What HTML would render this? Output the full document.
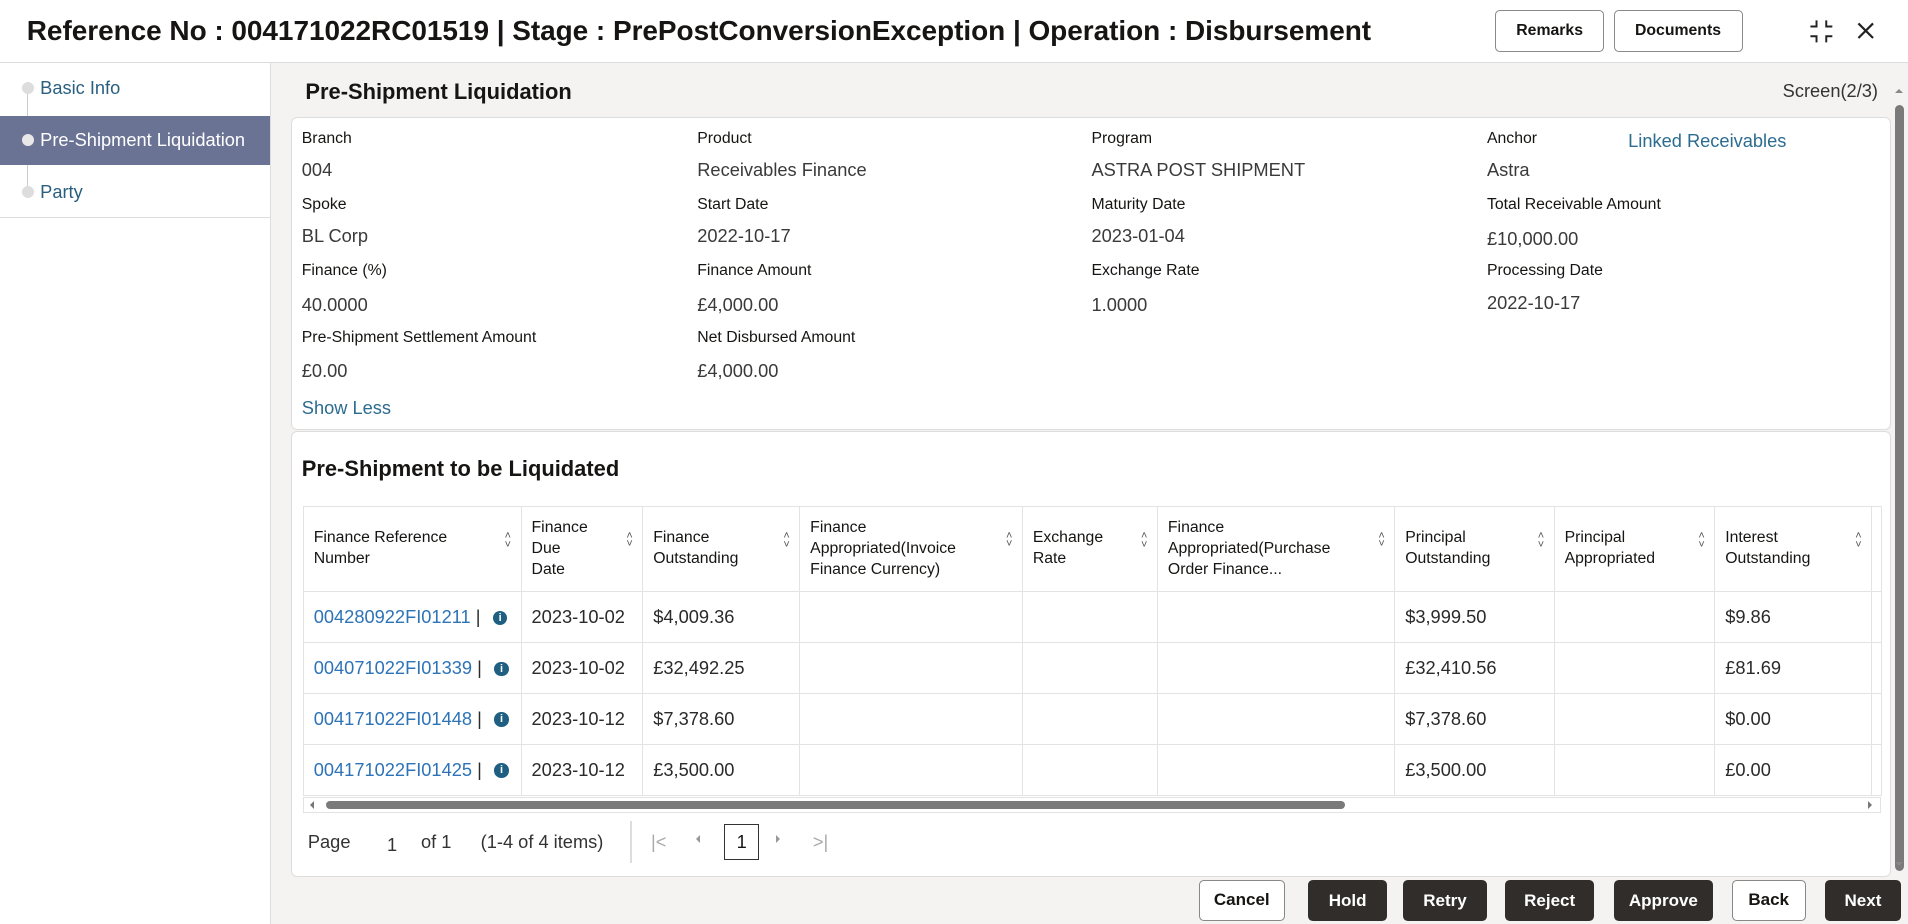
<!DOCTYPE html>
<html><head><meta charset="utf-8">
<style>
html,body{margin:0;padding:0;width:1908px;height:924px;overflow:hidden;background:#fff;}
#w{position:absolute;left:0;top:0;width:1568px;height:759px;zoom:1.21684;font-family:"Liberation Sans",sans-serif;color:#161513;background:#f4f3f2;overflow:hidden;}
.a{position:absolute;white-space:nowrap;}
.hdr{left:0;top:0;width:1568px;height:51px;background:#fff;border-bottom:1px solid #dcdcdc;}
.title{left:22px;top:12px;font-size:23px;font-weight:bold;letter-spacing:-0.03px;}
.obtn{border:1px solid #8a8a8a;border-radius:4px;background:#fff;font-size:13px;font-weight:bold;text-align:center;box-sizing:border-box;}
.side{left:0;top:52px;width:222px;height:707px;background:#fff;border-right:1px solid #ddd;}
.nav{font-size:15px;color:#2a5f80;}
.card{background:#fff;border:1px solid #ddd;border-radius:5px;box-sizing:border-box;}
.lb{font-size:13px;color:#161513;}
.vl{font-size:15px;color:#3a3a3a;}
.link{color:#2b6c8f;}
table{border-collapse:collapse;position:absolute;left:249px;top:416px;font-size:13px;table-layout:fixed;width:1297px;}
td,th{border:1px solid #e3e3e3;padding:0 8px;text-align:left;vertical-align:middle;overflow:hidden;}
th{font-weight:normal;height:69px;line-height:17px;}
td{height:41px;font-size:15px;color:#2a2a2a;}
.srt{float:right;color:#555;font-size:9px;line-height:7px;margin-top:3px;}
.ref{color:#2e73b6;}
.inf{display:inline-block;width:12px;height:12px;border-radius:50%;background:#1f5f82;color:#fff;font-size:9px;font-weight:bold;text-align:center;line-height:12px;vertical-align:2px;margin-left:6px;}
.dbtn{background:#312d2a;color:#fff;border-radius:4px;font-size:14px;font-weight:bold;text-align:center;line-height:34px;height:34px;top:723px;}
.wbtn{background:#fff;color:#161513;border:1px solid #888;border-radius:4px;font-size:14px;font-weight:bold;text-align:center;line-height:32px;height:34px;top:723px;box-sizing:border-box;}
</style></head><body><div id="w">
<div class="a hdr"></div>
<div class="a title">Reference No : 004171022RC01519 | Stage : PrePostConversionException | Operation : Disbursement</div>
<div class="a obtn" style="left:1229px;top:8px;width:89px;height:35px;line-height:33px;">Remarks</div>
<div class="a obtn" style="left:1326px;top:8px;width:106px;height:35px;line-height:33px;">Documents</div>
<svg class="a" style="left:1486px;top:15px" width="22" height="22" viewBox="0 0 22 22" fill="none" stroke="#222" stroke-width="1.6"><path d="M7 2v5H2M15 2v5h5M7 20v-5H2M15 20v-5h5"/></svg>
<svg class="a" style="left:1525px;top:17px" width="16" height="16" viewBox="0 0 16 16" stroke="#222" stroke-width="1.8"><path d="M2 2l12 12M14 2L2 14"/></svg>

<div class="a side"></div>
<div class="a" style="left:22px;top:72px;width:1px;height:86px;background:#ccc"></div>
<div class="a" style="left:0;top:95px;width:222px;height:41px;background:#6b7394"></div>
<div class="a" style="left:0;top:178px;width:222px;height:1px;background:#ddd"></div>
<div class="a" style="left:18px;top:67px;width:10px;height:10px;border-radius:50%;background:#ddd"></div>
<div class="a" style="left:18px;top:110px;width:10px;height:10px;border-radius:50%;background:#e8e8e8"></div>
<div class="a" style="left:18px;top:153px;width:10px;height:10px;border-radius:50%;background:#ddd"></div>
<div class="a nav" style="left:33px;top:63px">Basic Info</div>
<div class="a nav" style="left:33px;top:106px;color:#fff">Pre-Shipment Liquidation</div>
<div class="a nav" style="left:33px;top:149px">Party</div>

<div class="a" style="left:251px;top:65px;font-size:18px;font-weight:bold">Pre-Shipment Liquidation</div>
<div class="a" style="left:1465px;top:66px;font-size:15px;color:#333">Screen(2/3)</div>

<div class="a card" style="left:239px;top:96px;width:1315px;height:257px"></div>
<div class="a lb" style="left:248px;top:107px">Branch</div><div class="a vl" style="left:248px;top:131px">004</div>
<div class="a lb" style="left:573px;top:107px">Product</div><div class="a vl" style="left:573px;top:131px">Receivables Finance</div>
<div class="a lb" style="left:897px;top:107px">Program</div><div class="a vl" style="left:897px;top:131px">ASTRA POST SHIPMENT</div>
<div class="a lb" style="left:1222px;top:107px">Anchor</div><div class="a vl" style="left:1222px;top:131px">Astra</div>
<div class="a vl link" style="left:1338px;top:107px">Linked Receivables</div>
<div class="a lb" style="left:248px;top:161px">Spoke</div><div class="a vl" style="left:248px;top:185px">BL Corp</div>
<div class="a lb" style="left:573px;top:161px">Start Date</div><div class="a vl" style="left:573px;top:185px">2022-10-17</div>
<div class="a lb" style="left:897px;top:161px">Maturity Date</div><div class="a vl" style="left:897px;top:185px">2023-01-04</div>
<div class="a lb" style="left:1222px;top:161px">Total Receivable Amount</div><div class="a vl" style="left:1222px;top:187px">£10,000.00</div>
<div class="a lb" style="left:248px;top:215px">Finance (%)</div><div class="a vl" style="left:248px;top:242px">40.0000</div>
<div class="a lb" style="left:573px;top:215px">Finance Amount</div><div class="a vl" style="left:573px;top:242px">£4,000.00</div>
<div class="a lb" style="left:897px;top:215px">Exchange Rate</div><div class="a vl" style="left:897px;top:242px">1.0000</div>
<div class="a lb" style="left:1222px;top:215px">Processing Date</div><div class="a vl" style="left:1222px;top:240px">2022-10-17</div>
<div class="a lb" style="left:248px;top:270px">Pre-Shipment Settlement Amount</div><div class="a vl" style="left:248px;top:296px">£0.00</div>
<div class="a lb" style="left:573px;top:270px">Net Disbursed Amount</div><div class="a vl" style="left:573px;top:296px">£4,000.00</div>
<div class="a vl link" style="left:248px;top:326px">Show Less</div>

<div class="a card" style="left:239px;top:354px;width:1315px;height:367px"></div>
<div class="a" style="left:248px;top:375px;font-size:18px;font-weight:bold">Pre-Shipment to be Liquidated</div>
<table>
<colgroup><col style="width:179px"><col style="width:100px"><col style="width:129px"><col style="width:183px"><col style="width:111px"><col style="width:195px"><col style="width:131px"><col style="width:132px"><col style="width:129px"><col style="width:8px"></colgroup>
<tr>
<th>Finance Reference<span class="srt">˄<br>˅</span><br>Number</th>
<th>Finance<br>Due<span class="srt" style="margin-top:-6px">˄<br>˅</span><br>Date</th>
<th>Finance<span class="srt">˄<br>˅</span><br>Outstanding</th>
<th>Finance<br>Appropriated(Invoice<span class="srt" style="margin-top:-6px">˄<br>˅</span><br>Finance Currency)</th>
<th>Exchange<span class="srt">˄<br>˅</span><br>Rate</th>
<th>Finance<br>Appropriated(Purchase<span class="srt" style="margin-top:-6px">˄<br>˅</span><br>Order Finance...</th>
<th>Principal<span class="srt">˄<br>˅</span><br>Outstanding</th>
<th>Principal<span class="srt">˄<br>˅</span><br>Appropriated</th>
<th>Interest<span class="srt">˄<br>˅</span><br>Outstanding</th>
<th style="padding:0"></th>
</tr>
<tr><td><span class="ref">004280922FI01211</span> | <span class="inf">i</span></td><td>2023-10-02</td><td>$4,009.36</td><td></td><td></td><td></td><td>$3,999.50</td><td></td><td>$9.86</td><td style="padding:0"></td></tr>
<tr><td><span class="ref">004071022FI01339</span> | <span class="inf">i</span></td><td>2023-10-02</td><td>£32,492.25</td><td></td><td></td><td></td><td>£32,410.56</td><td></td><td>£81.69</td><td style="padding:0"></td></tr>
<tr><td><span class="ref">004171022FI01448</span> | <span class="inf">i</span></td><td>2023-10-12</td><td>$7,378.60</td><td></td><td></td><td></td><td>$7,378.60</td><td></td><td>$0.00</td><td style="padding:0"></td></tr>
<tr><td><span class="ref">004171022FI01425</span> | <span class="inf">i</span></td><td>2023-10-12</td><td>£3,500.00</td><td></td><td></td><td></td><td>£3,500.00</td><td></td><td>£0.00</td><td style="padding:0"></td></tr>
</table>
<div class="a" style="left:249px;top:655px;width:1297px;height:13px;background:#fff;border:1px solid #e3e3e3;box-sizing:border-box"></div>
<div class="a" style="left:268px;top:658px;width:837px;height:7px;border-radius:4px;background:#7a7a7a"></div>
<div class="a" style="left:255px;top:658px;width:0;height:0;border:4px solid transparent;border-right-color:#777;border-left:0"></div>
<div class="a" style="left:1535px;top:658px;width:0;height:0;border:4px solid transparent;border-left-color:#777;border-right:0"></div>

<div class="a" style="left:253px;top:683px;font-size:15px;color:#333">Page</div>
<div class="a" style="left:318px;top:685px;font-size:15px;color:#333">1</div>
<div class="a" style="left:346px;top:683px;font-size:15px;color:#333">of 1</div>
<div class="a" style="left:395px;top:683px;font-size:15px;color:#333">(1-4 of 4 items)</div>
<div class="a" style="left:518px;top:675px;width:1px;height:34px;background:#ddd"></div>
<div class="a" style="left:535px;top:683px;font-size:15px;color:#aaa">|&lt;</div>
<div class="a" style="left:572px;top:686px;width:0;height:0;border:4px solid transparent;border-right-color:#999;border-left:0"></div>
<div class="a" style="left:595px;top:677px;width:29px;height:30px;border:1px solid #333;box-sizing:border-box;font-size:15px;text-align:center;line-height:28px">1</div>
<div class="a" style="left:638px;top:686px;width:0;height:0;border:4px solid transparent;border-left-color:#999;border-right:0"></div>
<div class="a" style="left:668px;top:683px;font-size:15px;color:#aaa">&gt;|</div>

<div class="a" style="left:1557px;top:86px;width:8px;height:630px;border-radius:4px;background:#7a7a7a"></div>
<div class="a" style="left:1557px;top:73px;width:0;height:0;border:4px solid transparent;border-bottom-color:#888;border-top:0"></div>
<div class="a" style="left:1557px;top:708px;width:0;height:0;border:4px solid transparent;border-top-color:#888;border-bottom:0"></div>

<div class="a wbtn" style="left:985px;width:71px">Cancel</div>
<div class="a dbtn" style="left:1075px;width:65px">Hold</div>
<div class="a dbtn" style="left:1153px;width:69px">Retry</div>
<div class="a dbtn" style="left:1237px;width:73px">Reject</div>
<div class="a dbtn" style="left:1326px;width:82px">Approve</div>
<div class="a wbtn" style="left:1423px;width:61px">Back</div>
<div class="a dbtn" style="left:1500px;width:62px">Next</div>
</div></body></html>
